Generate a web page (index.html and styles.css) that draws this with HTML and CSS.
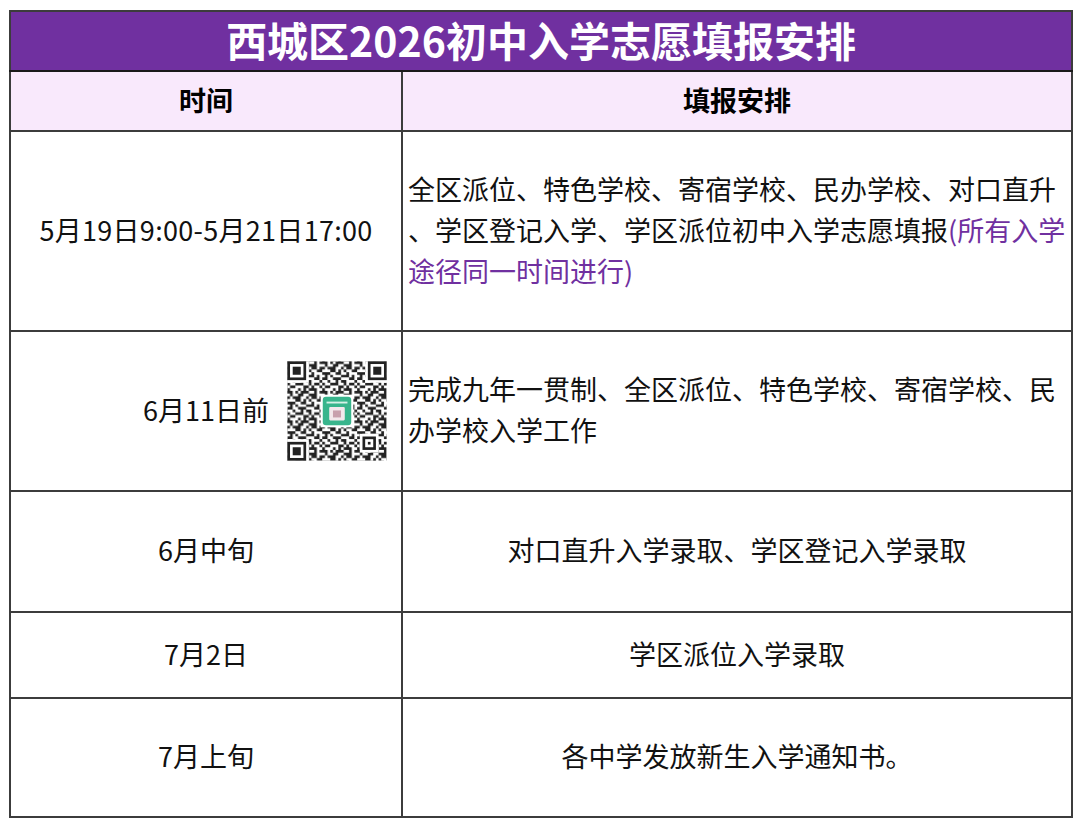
FILE: index.html
```html
<!DOCTYPE html>
<html lang="zh-CN">
<head>
<meta charset="utf-8">
<title>西城区2026初中入学志愿填报安排</title>
<link rel="stylesheet" href="styles.css">
</head>
<body>
<table class="plan">
  <colgroup>
    <col class="col-time">
    <col class="col-plan">
  </colgroup>
  <tr class="row-title">
    <td colspan="2" class="title">西城区2026初中入学志愿填报安排</td>
  </tr>
  <tr class="row-head">
    <td class="head">时间</td>
    <td class="head">填报安排</td>
  </tr>
  <tr class="row-1">
    <td class="time date-range">5月19日9:00-5月21日17:00</td>
    <td class="plan-left">全区派位、特色学校、寄宿学校、民办学校、对口直升<br>、学区登记入学、学区派位初中入学志愿填报<span class="note">(所有入学</span><br><span class="note">途径同一时间进行)</span></td>
  </tr>
  <tr class="row-2">
    <td class="time qr-cell">6月11日前
      <svg class="qr" viewBox="-0.5 -0.5 38 38" aria-hidden="true">
        <defs>
          <pattern id="qrdata" x="0" y="0" width="13" height="11" patternUnits="userSpaceOnUse">
            <path fill="#222" d="M0 0h2v1h-2zM3 0h1v1h-1zM5 0h3v1h-3zM10 0h1v1h-1zM12 0h1v1h-1z
            M1 1h1v1h-1zM4 1h2v1h-2zM8 1h3v1h-3z
            M0 2h1v1h-1zM2 2h3v1h-3zM7 2h1v1h-1zM9 2h2v1h-2zM12 2h1v1h-1z
            M3 3h2v1h-2zM6 3h1v1h-1zM8 3h1v1h-1zM11 3h2v1h-2z
            M0 4h3v1h-3zM5 4h2v1h-2zM9 4h1v1h-1z
            M1 5h1v1h-1zM3 5h1v1h-1zM7 5h3v1h-3zM11 5h1v1h-1z
            M0 6h2v1h-2zM4 6h3v1h-3zM10 6h2v1h-2z
            M2 7h1v1h-1zM5 7h1v1h-1zM7 7h2v1h-2zM12 7h1v1h-1z
            M0 8h1v1h-1zM3 8h3v1h-3zM8 8h1v1h-1zM10 8h2v1h-2z
            M1 9h2v1h-2zM6 9h2v1h-2zM9 9h1v1h-1zM12 9h1v1h-1z
            M0 10h1v1h-1zM4 10h1v1h-1zM6 10h1v1h-1zM8 10h3v1h-3z"/>
          </pattern>
        </defs>
        <rect x="-0.5" y="-0.5" width="38" height="38" fill="#fff"/>
        <rect x="0" y="0" width="37" height="37" fill="url(#qrdata)"/>
        <g fill="#fff">
          <rect x="0" y="0" width="8" height="8"/>
          <rect x="29" y="0" width="8" height="8"/>
          <rect x="0" y="29" width="8" height="8"/>
          <rect x="27" y="27" width="7" height="7"/>
        </g>
        <g fill="#222">
          <rect x="0" y="0" width="7" height="7"/>
          <rect x="30" y="0" width="7" height="7"/>
          <rect x="0" y="30" width="7" height="7"/>
          <rect x="28" y="28" width="5" height="5"/>
        </g>
        <g fill="#fff">
          <rect x="1" y="1" width="5" height="5"/>
          <rect x="31" y="1" width="5" height="5"/>
          <rect x="1" y="31" width="5" height="5"/>
          <rect x="29" y="29" width="3" height="3"/>
        </g>
        <g fill="#222">
          <rect x="2" y="2" width="3" height="3"/>
          <rect x="32" y="2" width="3" height="3"/>
          <rect x="2" y="32" width="3" height="3"/>
          <rect x="30" y="30" width="1" height="1"/>
        </g>
        <rect x="12.4" y="12.4" width="12.2" height="12.2" fill="#fff"/>
        <rect x="13.2" y="13.2" width="10.6" height="10.6" rx="1.2" fill="#38b58c"/>
        <rect x="14.6" y="15" width="7.8" height="0.7" fill="#d5f1e6"/>
        <rect x="15.6" y="17" width="5.8" height="5" rx="0.4" fill="#f3e8ec"/>
        <rect x="17" y="18.3" width="3" height="2.6" fill="#c8a0ad"/>
      </svg>
    </td>
    <td class="plan-left">完成九年一贯制、全区派位、特色学校、寄宿学校、民<br>办学校入学工作</td>
  </tr>
  <tr class="row-3">
    <td class="time">6月中旬</td>
    <td class="plan-center">对口直升入学录取、学区登记入学录取</td>
  </tr>
  <tr class="row-4">
    <td class="time">7月2日</td>
    <td class="plan-center">学区派位入学录取</td>
  </tr>
  <tr class="row-5">
    <td class="time">7月上旬</td>
    <td class="plan-center">各中学发放新生入学通知书。</td>
  </tr>
</table>
</body>
</html>
```

FILE: styles.css
```css
html, body {
  margin: 0;
  padding: 0;
  background: #ffffff;
}

body {
  font-family: "Noto Sans CJK SC", "Noto Sans", sans-serif;
  color: #111111;
}

.plan {
  border-collapse: collapse;
  margin: 10px 0 0 9px;
  width: 1062px;
  table-layout: fixed;
}

.col-time {
  width: 392px;
}

.col-plan {
  width: 670px;
}

.plan td {
  border: 2px solid #3c3c3c;
  padding: 0 0 4px 0;
  font-size: 27px;
  line-height: 41px;
  vertical-align: middle;
}

.row-title { height: 60px; }
.row-head { height: 60px; }
.row-1 { height: 200px; }
.row-2 { height: 160px; }
.row-3 { height: 121px; }
.row-4 { height: 86px; }
.row-5 { height: 119px; }

.plan td.title {
  background: #7030a0;
  color: #ffffff;
  font-size: 41px;
  font-weight: 700;
  line-height: 50px;
  text-align: center;
  border-bottom-color: #1a1a1a;
}

.plan td.head {
  background: #f9e9fc;
  color: #000000;
  font-weight: 700;
  text-align: center;
}

.time {
  text-align: center;
  white-space: nowrap;
}

.date-range {
  letter-spacing: 0.3px;
}

.plan td.plan-left {
  text-align: left;
  padding-left: 5px;
  white-space: nowrap;
}

.plan-center {
  text-align: center;
  white-space: nowrap;
}

.note {
  color: #7030a0;
}

.qr-cell {
  position: relative;
}

.qr {
  position: absolute;
  right: 13px;
  top: 27px;
  width: 102px;
  height: 104px;
}
```
